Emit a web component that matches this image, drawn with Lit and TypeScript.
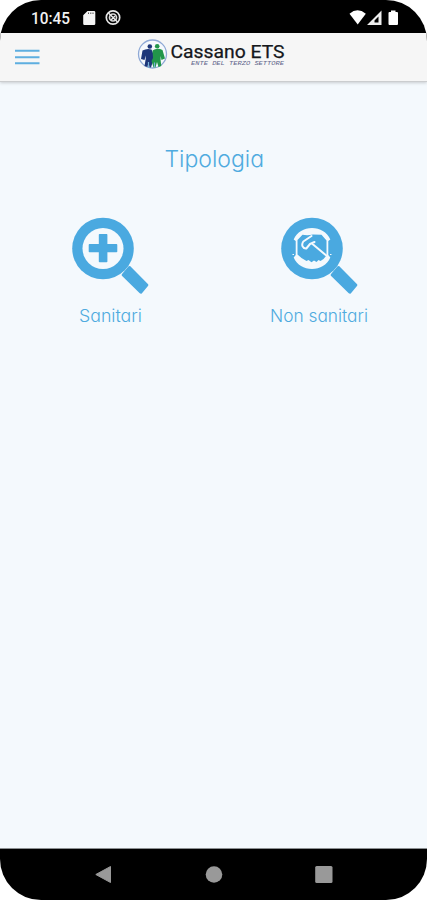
import { LitElement, html, css, svg } from "lit";
import { customElement, property } from "lit/decorators.js";

@customElement("search-icon")
class SearchIcon extends LitElement {
  @property() kind = "health";

  static styles = css`
    :host { display: block; width: 78px; height: 78px; }
    svg { display: block; }
  `;

  render() {
    const health = svg`
      <circle cx="32" cy="32.5" r="20.5" fill="#f4f9fd"/>
      <path fill="#4aa9e0" d="M28.6 18h7a.8.8 0 0 1 .8.8v9.3h9.1a.8.8 0 0 1 .8.8v6.6a.8.8 0 0 1-.8.8h-9.1v9.2a.8.8 0 0 1-.8.8h-7a.8.8 0 0 1-.8-.8v-9.2h-9.3a.8.8 0 0 1-.8-.8v-6.6a.8.8 0 0 1 .8-.8h9.3v-9.3a.8.8 0 0 1 .8-.8z"/>`;
    const care = svg`
      <path fill="#f4f9fd" d="M13.700 23.500C17 16 24 12 32 12S47 16 50.300 23.500L48.300 25V39L50.300 41.500C47 49 40 53 32 53S17 49 13.700 41.500L15.700 39V25z"/>
      <path fill="#4aa9e0" d="M17.500 24L22.500 18.800Q28 19.600 33 18.500L41.500 18.800L46.500 24.500V39.500L43.500 43L40.500 45L38.500 44L36.500 46L34 44.500L31.500 46.200L28.500 44L26.500 45L21.500 42L17.500 38.500z"/>
      <path fill="none" stroke="#f4f9fd" stroke-width="2" stroke-linecap="round" stroke-linejoin="round" d="M31.500 20L23.300 25.500C21 29 22.700 32.800 26.300 32.500L30 28L34.500 26M32.500 28L46.300 39.500"/>
      <path stroke="#f4f9fd" stroke-width="1" d="M12.500 38.500h1.500M50 38.500h1.500"/>`;
    return html`<svg width="78" height="78" viewBox="0 0 78 78">
      <circle cx="32" cy="32.500" r="30.800" fill="#4aa9e0"/>
      <path fill="#4aa9e0" stroke="#4aa9e0" stroke-width="3" stroke-linejoin="round" d="M58.500 51.500L75.800 69L69.800 76.200L52.200 58.900z"/>
      ${this.kind === "health" ? health : care}
    </svg>`;
  }
}

@customElement("app-root")
class AppRoot extends LitElement {
  static styles = css`
    :host { display: block; background: #fff; }
    .screen { width: 427px; height: 900px; display: flex; flex-direction: column; overflow: hidden; border-radius: 41px; background: #000; }
    .status { height: 33px; flex: none; display: flex; }
    .header { height: 48px; flex: none; background: #f6f6f6; display: flex; z-index: 1; border-bottom: 1px solid #cbcdcf; box-shadow: 0 1px 3px rgba(0,0,0,.18); }
    .content { flex: 1; background: #f4f9fd; border-bottom: 1px solid #8c9092; display: flex; flex-direction: column; }
    .title { height: 44px; margin-top: 54px; }
    .options { display: grid; grid-template-columns: 219px 199px; margin-top: 36px; }
    .option { display: flex; flex-direction: column; align-items: center; }
    .label { margin-top: 5px; }
    .nav { height: 51px; flex: none; }
    svg { display: block; }
    .muli { font-family: Inter, "Open Sans", sans-serif; font-weight: 300; font-feature-settings: "cv11" 1; fill: #4fabdf; }
    .roboto { font-family: Roboto, sans-serif; font-weight: 500; }
    .brand { font-family: Roboto, sans-serif; fill: #15171c; }
    .tag { font-family: "Liberation Mono", monospace; font-style: italic; fill: #62668c; }
  `;

  render() {
    return html`<div class="screen">
      <div class="status">
        <svg width="427" height="33" viewBox="0 0 427 33">
          <text class="roboto" x="31" y="23.500" font-size="16" textLength="39" lengthAdjust="spacingAndGlyphs" fill="#f2f2f2">10:45</text>
          <path fill="#f4f4f4" d="M87.500 11H94a1.300 1.300 0 0 1 1.300 1.300v11.400A1.300 1.300 0 0 1 94 25h-9.500a1.300 1.300 0 0 1-1.300-1.300V15.300z"/>
          <path d="M88 13.300h1M90.300 13.300h1M92.500 13.300h1" stroke="#555" stroke-width="1.500"/>
          <circle cx="113" cy="17.500" r="6.700" fill="none" stroke="#e8e8e8" stroke-width="1.700"/>
          <circle cx="113" cy="17.500" r="3.500" fill="none" stroke="#d8d8d8" stroke-width="1.700"/>
          <path d="M108.500 13L117.500 22M111 20l4-4" stroke="#e8e8e8" stroke-width="1.500"/>
          <path fill="#fff" d="M349.500 13.700Q357.500 7 365.800 13.700L357.700 24.500z"/>
          <path fill="#eee" fill-rule="evenodd" d="M381.500 10.500V25H367zM378.500 16.500L374.500 20.500V22.500H378.500z"/>
          <path fill="#fff" d="M391 10.500h4.500V12H397a1 1 0 0 1 1 1v11a1 1 0 0 1-1 1h-7.500a1 1 0 0 1-1-1V13a1 1 0 0 1 1-1h1.500z"/>
        </svg>
      </div>
      <div class="header">
        <svg width="427" height="48" viewBox="0 0 427 48">
          <path d="M15 17.700H39.500M15 24.200H39.500M15 30.200H39.500" stroke="#5eaee0" stroke-width="2"/>
          <circle cx="152.500" cy="21" r="14" fill="#f5f8fc" stroke="#8fa9d6" stroke-width="1.300"/>
          <circle cx="149.800" cy="13.500" r="2.300" fill="#1d3679"/>
          <path fill="#1d3679" d="M142.500 17.500Q147 15 151.500 16.500L153 20V28L151 34.500H149.500L148.500 29L147.500 34L144.500 33L145.700 26V22.500L144.500 27L141 26z"/>
          <circle cx="157.200" cy="13.300" r="2.300" fill="#22964a"/>
          <path fill="#22964a" d="M152.500 17.500Q157 14.500 162.500 17L165 25.500L161.500 27L160.600 23V27L161.300 33L158.500 34L157 29L155.500 34.500H153.500L151.500 28L153 25z"/>
          <path d="M148.500 29v6M154.500 29.500v5" stroke="#78b3d7" stroke-width="1.200"/>
          <text class="brand" x="170.500" y="24.800" font-size="17.500" textLength="114" lengthAdjust="spacingAndGlyphs" stroke="#15171c" stroke-width=".25">Cassano ETS</text>
          <text class="tag" x="191" y="31.500" font-size="4.500" textLength="93" lengthAdjust="spacingAndGlyphs">ENTE DEL TERZO SETTORE</text>
        </svg>
      </div>
      <div class="content">
        <svg class="title" width="427" height="44">
          <text class="muli" x="164.500" y="31" font-size="23" textLength="99.500" lengthAdjust="spacingAndGlyphs">Tipologia</text>
        </svg>
        <div class="options">
          <div class="option">
            <search-icon kind="health"></search-icon>
            <svg class="label" width="110" height="32"><text class="muli" x="24" y="22.500" font-size="17.300" textLength="63" lengthAdjust="spacingAndGlyphs">Sanitari</text></svg>
          </div>
          <div class="option">
            <search-icon kind="care"></search-icon>
            <svg class="label" width="110" height="32"><text class="muli" x="6" y="22.500" font-size="17.300" textLength="98" lengthAdjust="spacingAndGlyphs">Non sanitari</text></svg>
          </div>
        </div>
      </div>
      <div class="nav">
        <svg width="427" height="51" viewBox="0 0 427 51">
          <path fill="#999" stroke="#999" stroke-linejoin="round" d="M95.800 25.500L110.500 17.500V33.500z"/>
          <circle cx="214" cy="25.500" r="8.300" fill="#999"/>
          <rect x="315.200" y="17" width="17.300" height="17" rx="1.500" fill="#999"/>
        </svg>
      </div>
    </div>`;
  }
}
